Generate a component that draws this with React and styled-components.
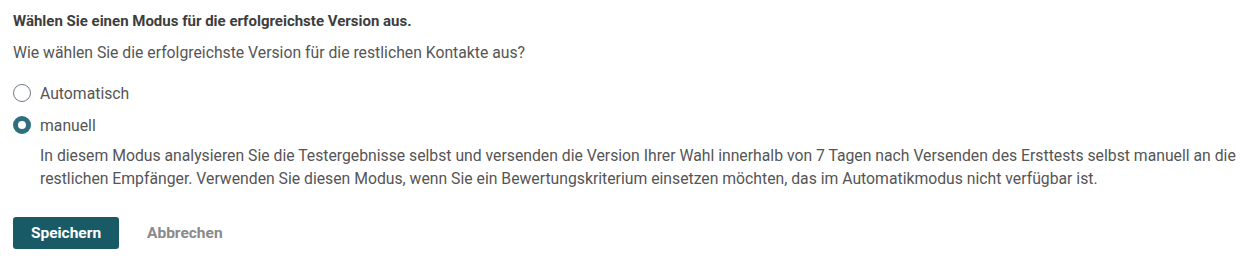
import styled, { createGlobalStyle } from "styled-components";

const GlobalStyle = createGlobalStyle`
  body {
    margin: 0;
    background: #fff;
    font-family: Roboto, "Liberation Sans", sans-serif;
    color: #555;
  }
`;

const options = [
  { id: "auto", label: "Automatisch", checked: false },
  { id: "manual", label: "manuell", checked: true },
];

const App = () => {
  return (
    <Wrapper>
      <GlobalStyle />
      <Title>Wählen Sie einen Modus für die erfolgreichste Version aus.</Title>
      <Question>
        Wie wählen Sie die erfolgreichste Version für die restlichen Kontakte aus?
      </Question>
      <RadioList>
        {options.map(({ id, label, checked }) => (
          <RadioRow key={id}>
            <Radio $checked={checked} />
            <RadioLabel>{label}</RadioLabel>
          </RadioRow>
        ))}
      </RadioList>
      <Description>
        In diesem Modus analysieren Sie die Testergebnisse selbst und versenden die
        Version Ihrer Wahl innerhalb von 7 Tagen nach Versenden des Ersttests selbst
        manuell an die restlichen Empfänger. Verwenden Sie diesen Modus, wenn Sie ein
        Bewertungskriterium einsetzen möchten, das im Automatikmodus nicht verfügbar
        ist.
      </Description>
      <Actions>
        <PrimaryButton>Speichern</PrimaryButton>
        <LinkButton>Abbrechen</LinkButton>
      </Actions>
    </Wrapper>
  );
};

export default App;

const Wrapper = styled.div`
  padding: 12px 2px 12px 13px;
`;

const Title = styled.h2`
  margin: 0;
  font-size: 15px;
  line-height: 18px;
  font-weight: 700;
  color: #3d3d3d;
`;

const Question = styled.p`
  margin: 12px 0 0;
  font-size: 15.75px;
  line-height: 21px;
  color: #555;
`;

const RadioList = styled.div`
  display: flex;
  flex-direction: column;
  gap: 12px;
  margin-top: 20px;
`;

const RadioRow = styled.label`
  display: flex;
  align-items: center;
  gap: 9px;
  height: 20px;
`;

const Radio = styled.span`
  box-sizing: border-box;
  width: 18px;
  height: 18px;
  border-radius: 50%;
  border: ${(p) => (p.$checked ? "5px solid #2d6e7f" : "1.5px solid #6f7a84")};
  background: #fff;
  flex-shrink: 0;
`;

const RadioLabel = styled.span`
  font-size: 15.75px;
  color: #555;
`;

const Description = styled.p`
  margin: 9px 0 0 27px;
  font-size: 15.75px;
  line-height: 23px;
  color: #555;
`;

const Actions = styled.div`
  display: flex;
  align-items: center;
  gap: 28px;
  margin-top: 27px;
`;

const PrimaryButton = styled.button`
  width: 106px;
  height: 32px;
  border: none;
  border-radius: 3px;
  background: #185a66;
  color: #fff;
  font-family: inherit;
  font-size: 15.5px;
  font-weight: 700;
`;

const LinkButton = styled.button`
  border: none;
  background: transparent;
  padding: 0;
  color: #8a8a8a;
  font-family: inherit;
  font-size: 15.5px;
  font-weight: 700;
`;
